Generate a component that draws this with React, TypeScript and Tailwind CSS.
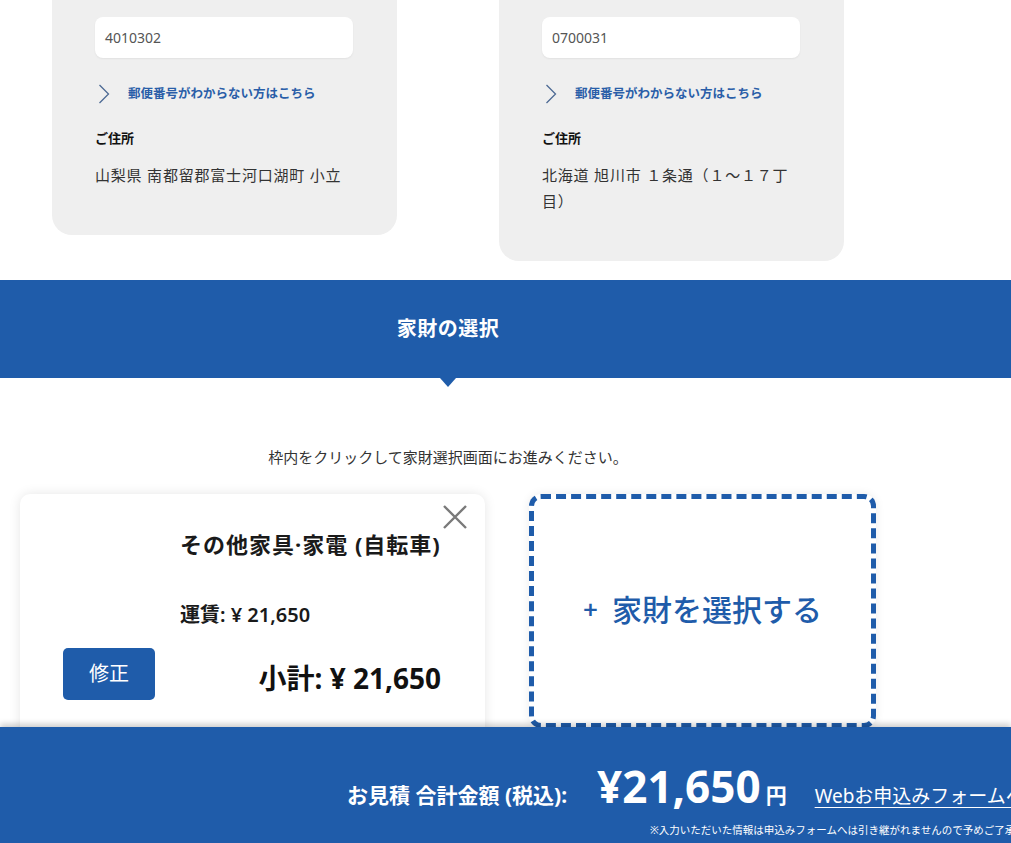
import React from 'react';

const font = { fontFamily: '"Noto Sans", "Noto Sans CJK JP", sans-serif' };

type AddressCardProps = {
  zip: string;
  address: string;
};

function Chevron() {
  return (
    <svg width="12" height="20" viewBox="0 0 12 20" fill="none" className="shrink-0">
      <polyline points="1.5,1 10.5,10 1.5,19" stroke="#4d6a94" strokeWidth="1.3" />
    </svg>
  );
}

function AddressCard({ zip, address }: AddressCardProps) {
  return (
    <div className="w-[345px] rounded-b-[20px] bg-[#efefef] pl-[43px] pr-[44px] pt-[17px] pb-[47px]">
      <div className="flex h-[41px] items-center rounded-[8px] bg-white px-[10px] text-[14px] text-[#555] shadow-[0_1px_2px_rgba(0,0,0,0.06)]">
        {zip}
      </div>
      <a className="mt-[26px] flex h-[20px] items-center gap-[18px] pl-[3px] text-[12.5px] font-bold text-[#2a5ea8]">
        <Chevron />
        郵便番号がわからない方はこちら
      </a>
      <p className="mt-[24px] text-[13px] leading-[20px] font-bold text-[#111]">ご住所</p>
      <p className="mt-[14px] text-[15px] leading-[26px] tracking-[0.8px] text-[#333]">{address}</p>
    </div>
  );
}

function CloseIcon() {
  return (
    <svg width="24" height="24" viewBox="0 0 24 24" fill="none">
      <path d="M1 1L23 23M23 1L1 23" stroke="#7a7a7a" strokeWidth="2.4" />
    </svg>
  );
}

function ItemCard() {
  return (
    <div className="relative h-[260px] w-[465px] shrink-0 rounded-[10px] bg-white shadow-[0_0_12px_rgba(0,0,0,0.1)]">
      <button className="absolute right-[18px] top-[11px]">
        <CloseIcon />
      </button>
      <h3 className="pl-[160px] pt-[35px] text-[22px] leading-[30px] font-bold tracking-[1px] text-[#1a1a1a]">
        その他家具·家電 (自転車)
      </h3>
      <p className="mt-[43px] pl-[160px] text-[20px] leading-[26px] font-semibold text-[#1a1a1a]">運賃: ¥ 21,650</p>
      <div className="mt-[20px] flex items-center justify-between pl-[43px] pr-[44px]">
        <button className="flex h-[52px] w-[92px] items-center justify-center rounded-[5px] bg-[#1f5caa] text-[20px] text-white">
          修正
        </button>
        <p className="mt-[8px] text-[28px] leading-[36px] font-bold text-[#111]">小計: ¥ 21,650</p>
      </div>
    </div>
  );
}

export default function App() {
  return (
    <div className="flex h-[843px] w-[1011px] flex-col overflow-hidden bg-white" style={font}>
      <main className="relative min-h-0 flex-1 overflow-hidden">
        <div className="ml-[52px] flex items-start gap-[102px]">
          <AddressCard zip="4010302" address="山梨県 南都留郡富士河口湖町 小立" />
          <AddressCard zip="0700031" address="北海道 旭川市 １条通（１～１７丁目）" />
        </div>

        <section className="mt-[19px]">
          <div className="flex h-[98px] items-center bg-[#1f5caa]">
            <h2 className="w-[896px] text-center text-[20px] font-bold tracking-[0.5px] text-white">家財の選択</h2>
          </div>
          <div className="ml-[440px] h-0 w-0 border-x-[8px] border-t-[9px] border-x-transparent border-t-[#1f5caa]" />
        </section>

        <p className="mt-[59px] w-[896px] text-center text-[15px] leading-[22px] text-[#333]">
          枠内をクリックして家財選択画面にお進みください。
        </p>

        <div className="ml-[20px] mt-[26px] flex items-start gap-[44px]">
          <ItemCard />
          <button className="flex h-[234px] w-[347px] items-center justify-center gap-[14px] rounded-[12px] border-[5px] border-dashed border-[#1f5caa] bg-white pb-[4px] text-[30px] font-medium text-[#1f5caa] shadow-[0_0_10px_rgba(0,0,0,0.08)]">
            <span className="text-[26px] font-semibold">+</span>
            <span>家財を選択する</span>
          </button>
        </div>
      </main>

      <footer className="relative z-10 h-[116px] shrink-0 overflow-hidden whitespace-nowrap bg-[#1f5caa] pt-[37px] text-white shadow-[0_-3px_6px_rgba(0,0,0,0.2)]">
        <div className="flex items-baseline pl-[347px]">
          <span className="text-[21px] font-bold">お見積 合計金額 (税込):</span>
          <span className="ml-[30px] text-[44px] leading-none font-bold">¥21,650</span>
          <span className="ml-[5px] text-[21px] font-semibold">円</span>
          <a className="ml-[28px] text-[19px] underline underline-offset-[4px]">Webお申込みフォームへ</a>
        </div>
        <p className="mt-[10px] pl-[650px] text-[10.5px] leading-[16px]">
          ※入力いただいた情報は申込みフォームへは引き継がれませんので予めご了承ください。
        </p>
      </footer>
    </div>
  );
}
